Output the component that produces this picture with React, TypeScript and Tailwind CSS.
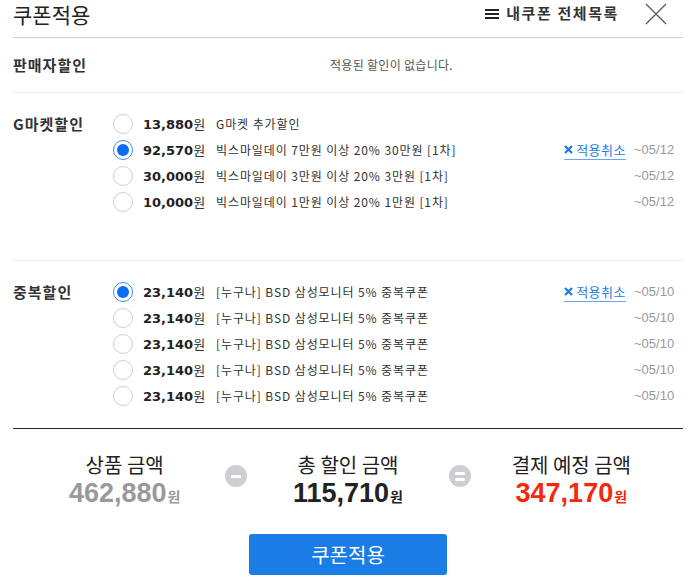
const kr = "font-['Noto_Sans_CJK_KR',sans-serif]";
const num = "font-['DejaVu_Sans','Noto_Sans_CJK_KR',sans-serif]";
const big = "font-['Liberation_Sans','Noto_Sans_CJK_KR',sans-serif]";

type Coupon = { amount: string; desc: string; date?: string; checked?: boolean };

const gmarket: Coupon[] = [
  { amount: "13,880", desc: "G마켓 추가할인" },
  { amount: "92,570", desc: "빅스마일데이 7만원 이상 20% 30만원 [1차]", date: "~05/12", checked: true },
  { amount: "30,000", desc: "빅스마일데이 3만원 이상 20% 3만원 [1차]", date: "~05/12" },
  { amount: "10,000", desc: "빅스마일데이 1만원 이상 20% 1만원 [1차]", date: "~05/12" },
];

const dup: Coupon[] = [
  { amount: "23,140", desc: "[누구나] BSD 삼성모니터 5% 중복쿠폰", date: "~05/10", checked: true },
  { amount: "23,140", desc: "[누구나] BSD 삼성모니터 5% 중복쿠폰", date: "~05/10" },
  { amount: "23,140", desc: "[누구나] BSD 삼성모니터 5% 중복쿠폰", date: "~05/10" },
  { amount: "23,140", desc: "[누구나] BSD 삼성모니터 5% 중복쿠폰", date: "~05/10" },
  { amount: "23,140", desc: "[누구나] BSD 삼성모니터 5% 중복쿠폰", date: "~05/10" },
];

function Radio({ checked }: { checked?: boolean }) {
  return checked ? (
    <span className="w-[20px] h-[20px] rounded-full border border-[#3b8cf0] bg-white flex items-center justify-center shrink-0">
      <span className="w-[12px] h-[12px] rounded-full bg-[#0a6cf0]" />
    </span>
  ) : (
    <span className="w-[20px] h-[20px] rounded-full border border-[#cfcfcf] bg-white shrink-0" />
  );
}

function Row({ c }: { c: Coupon }) {
  return (
    <div className="flex items-center h-[26px]">
      <Radio checked={c.checked} />
      <div className="w-[73px] ml-[10px] flex items-baseline shrink-0">
        <span className={`${num} font-bold text-[13px] text-[#222]`}>{c.amount}</span>
        <span className={`${kr} text-[13px] text-[#333]`}>원</span>
      </div>
      <div className={`${kr} flex-1 text-[12px] text-[#333] tracking-[0.9px]`}>{c.desc}</div>
      {c.checked && (
        <a className={`${kr} flex items-center gap-[3px] text-[13px] text-[#1a7de6] border-b border-[#6aa6ee] leading-[18px] mr-[8px] tracking-[0.5px]`}>
          <svg width="9" height="9" viewBox="0 0 9 9">
            <path d="M1 1L8 8M8 1L1 8" stroke="#1a7de6" strokeWidth="2.2" />
          </svg>
          적용취소
        </a>
      )}
      <span className={`${big} text-[13px] text-[#999] w-[38px] mr-[11px]`}>{c.date}</span>
    </div>
  );
}

function Section({ title, items, className }: { title: string; items: Coupon[]; className: string }) {
  return (
    <div className={`flex ${className}`}>
      <div className={`${kr} w-[100px] font-bold text-[15px] text-[#333] leading-[26px] tracking-[1px]`}>{title}</div>
      <div className="flex-1">
        {items.map((c, i) => (
          <Row key={i} c={c} />
        ))}
      </div>
    </div>
  );
}

function Sign({ eq }: { eq?: boolean }) {
  return (
    <div className="w-[22px] -mx-[11px] shrink-0 z-10 mt-[12px]">
      <div className="w-[22px] h-[22px] rounded-full bg-[#cdcdd3] flex flex-col items-center justify-center gap-[3px]">
        <span className="w-[10px] h-[3px] bg-white rounded-[1px]" />
        {eq && <span className="w-[10px] h-[3px] bg-white rounded-[1px]" />}
      </div>
    </div>
  );
}

function Total({ label, amount, color }: { label: string; amount: string; color: string }) {
  return (
    <div className="flex-1 flex flex-col items-center">
      <div className={`${kr} text-[20px] text-[#222] leading-[24px]`}>{label}</div>
      <div className="flex items-baseline leading-[30px] mt-[1px]">
        <span className={`${big} font-bold text-[27px] ${color}`}>{amount}</span>
        <span className={`${kr} font-bold text-[14px] ml-[1px] ${color}`}>원</span>
      </div>
    </div>
  );
}

export default function App() {
  return (
    <div className="w-[696px] h-[584px] bg-white px-[13px] overflow-hidden">
      <div className="flex items-center justify-between h-[38px] border-b border-[#cccccc]">
        <h1 className={`${kr} text-[21px] text-[#222] leading-[28px] -mt-[9px]`}>쿠폰적용</h1>
        <div className="flex items-center -mt-[10px]">
          <svg width="14" height="10" viewBox="0 0 14 10" className="mr-[7px]">
            <rect x="0" y="0" width="14" height="2" fill="#222" />
            <rect x="0" y="4" width="14" height="2" fill="#222" />
            <rect x="0" y="8" width="14" height="2" fill="#222" />
          </svg>
          <span className={`${kr} font-bold text-[15px] text-[#333] tracking-[1.6px]`}>내쿠폰 전체목록</span>
          <svg width="22" height="22" viewBox="0 0 22 22" className="ml-[26px] mr-[16px]">
            <path d="M1 1L21 21M21 1L1 21" stroke="#555" strokeWidth="1.2" />
          </svg>
        </div>
      </div>

      <div className="flex items-center h-[55px] border-b border-[#eeeeee]">
        <div className={`${kr} w-[100px] font-bold text-[15px] text-[#333] tracking-[1px]`}>판매자할인</div>
        <div className={`${kr} flex-1 text-center text-[12px] text-[#555] pr-[13px] tracking-[0.3px]`}>적용된 할인이 없습니다.</div>
      </div>

      <Section title="G마켓할인" items={gmarket} className="h-[168px] pt-[18px] border-b border-[#eeeeee]" />
      <Section title="중복할인" items={dup} className="h-[168px] pt-[18px] border-b border-[#222]" />

      <div className="flex pt-[24px]">
        <Total label="상품 금액" amount="462,880" color="text-[#999]" />
        <Sign />
        <Total label="총 할인 금액" amount="115,710" color="text-[#222]" />
        <Sign eq />
        <Total label="결제 예정 금액" amount="347,170" color="text-[#f2290d]" />
      </div>

      <div className="flex justify-center mt-[23px]">
        <button className={`${kr} w-[198px] h-[41px] rounded-[3px] bg-[#1a7de6] text-white text-[20px]`}>쿠폰적용</button>
      </div>
    </div>
  );
}
